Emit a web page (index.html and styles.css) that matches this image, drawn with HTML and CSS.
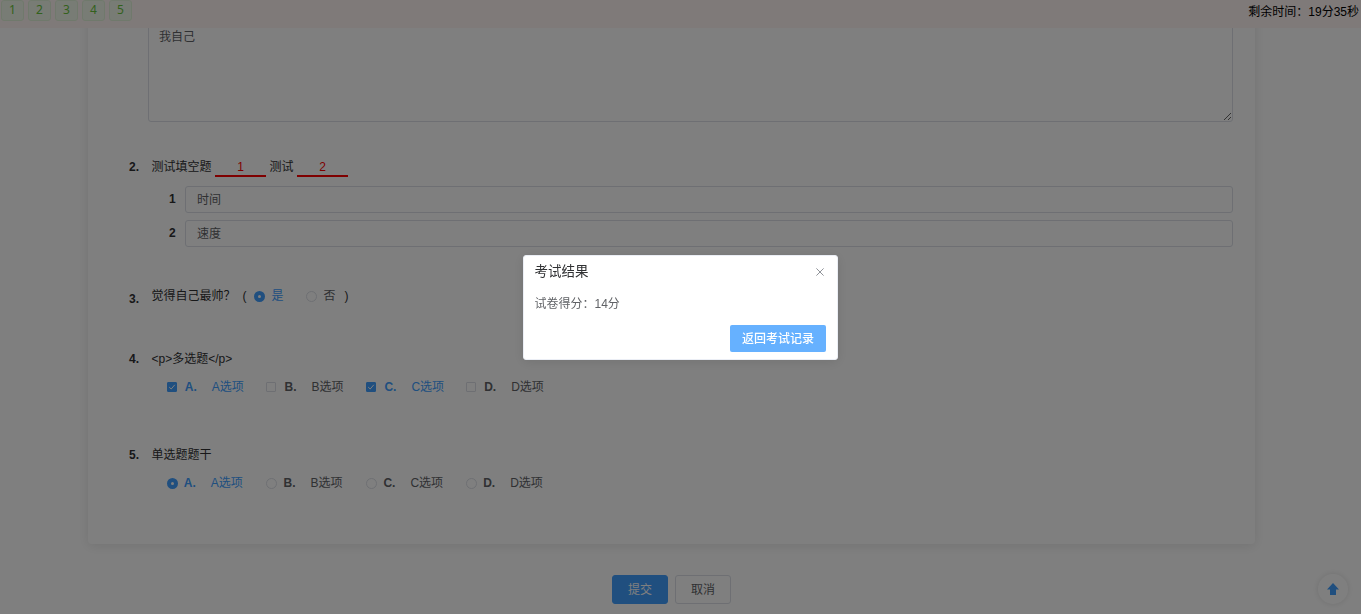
FILE: index.html
```
<!DOCTYPE html>
<html lang="zh-CN">
<head>
  <meta charset="UTF-8" />
  <meta name="viewport" content="width=device-width, initial-scale=1.0" />
  <title>在线考试</title>
  <link rel="stylesheet" href="styles.css">
</head>
<body>

  <header class="exam-header">
    <div class="tags">
      <span class="tag">1</span>
      <span class="tag">2</span>
      <span class="tag">3</span>
      <span class="tag">4</span>
      <span class="tag">5</span>
    </div>
    <div class="timer">剩余时间：19分35秒</div>
  </header>

  <main class="page">
    <div class="card">
      <textarea class="textarea">我自己</textarea>

      <section class="question q-fill">
        <div class="stem">
          <b class="num">2.</b>
          <span>测试填空题</span><span class="blank">1</span><span>测试</span><span class="blank">2</span>
        </div>
        <div class="fill-row"><b>1</b><input class="input" type="text" value="时间"></div>
        <div class="fill-row"><b>2</b><input class="input" type="text" value="速度"></div>
      </section>

      <section class="question q-judge">
        <div class="stem">
          <b class="num">3.</b>
          <span>觉得自己最帅？</span>
          <div class="judge">
            <span class="paren">(</span>
            <label class="choice checked"><i class="radio"></i><span>是</span></label>
            <label class="choice"><i class="radio"></i><span>否</span></label>
            <span class="paren">)</span>
          </div>
        </div>
      </section>

      <section class="question q-multi">
        <div class="stem"><b class="num">4.</b><span>&lt;p&gt;多选题&lt;/p&gt;</span></div>
        <div class="options">
          <label class="option checked"><i class="checkbox"><svg viewBox="0 0 10 10"><path d="M2.2 5.1 4.2 7 7.8 2.8" /></svg></i><b>A.</b><span>A选项</span></label>
          <label class="option"><i class="checkbox"></i><b>B.</b><span>B选项</span></label>
          <label class="option checked"><i class="checkbox"><svg viewBox="0 0 10 10"><path d="M2.2 5.1 4.2 7 7.8 2.8" /></svg></i><b>C.</b><span>C选项</span></label>
          <label class="option"><i class="checkbox"></i><b>D.</b><span>D选项</span></label>
        </div>
      </section>

      <section class="question q-single">
        <div class="stem"><b class="num">5.</b><span>单选题题干</span></div>
        <div class="options">
          <label class="option checked"><i class="radio"></i><b>A.</b><span>A选项</span></label>
          <label class="option"><i class="radio"></i><b>B.</b><span>B选项</span></label>
          <label class="option"><i class="radio"></i><b>C.</b><span>C选项</span></label>
          <label class="option"><i class="radio"></i><b>D.</b><span>D选项</span></label>
        </div>
      </section>
    </div>

    <div class="actions">
      <button class="btn btn-primary">提交</button>
      <button class="btn">取消</button>
    </div>
  </main>

  <div class="backtop">
    <svg viewBox="0 0 12 12"><path d="M6 0 12 6.5H9V12H3V6.5H0Z" /></svg>
  </div>

  <div class="overlay">
    <div class="dialog">
      <div class="dialog-header">
        <span>考试结果</span>
        <svg class="close" viewBox="0 0 8 8"><path d="M.4.4 7.6 7.6M7.6.4.4 7.6" /></svg>
      </div>
      <p class="dialog-text">试卷得分：14分</p>
      <div class="dialog-footer">
        <button class="btn-back">返回考试记录</button>
      </div>
    </div>
  </div>

</body>
</html>
```
FILE: styles.css
```
* {
  box-sizing: border-box;
}

body {
  margin: 0;
  height: 100vh;
  overflow: hidden;
  background: #fff;
  font-family: "Liberation Sans", "Noto Sans CJK SC", sans-serif;
  font-size: 12px;
  line-height: 18px;
  color: #303133;
}

button, input, textarea {
  font-family: inherit;
  font-size: 12px;
}

i {
  font-style: normal;
}

/* top bar */
.exam-header {
  position: fixed;
  top: 0;
  left: 0;
  right: 0;
  height: 28px;
  padding: 0 2px 0 1px;
  display: flex;
  justify-content: space-between;
  background: #fff4f2;
  color: #000;
  z-index: 10;
}

.tags {
  display: flex;
  gap: 4px;
}

.tag {
  width: 23px;
  height: 21px;
  line-height: 18px;
  text-align: center;
  font-family: "Noto Sans", sans-serif;
  background: #f0f9eb;
  border: 1px solid #e1f3d8;
  border-radius: 3px;
  color: #67c23a;
}

.timer {
  line-height: 24px;
}

/* paper */
.page {
  padding: 0 106px 0 88px;
}

.card {
  height: 544px;
  padding: 22px 22px 0 41px;
  border-radius: 0 0 4px 4px;
  box-shadow: 0 2px 12px 0 rgba(0, 0, 0, 0.1);
}

.textarea {
  display: block;
  width: 1085px;
  height: 100px;
  margin-left: 19px;
  padding: 5px 10px;
  line-height: 18px;
  color: #606266;
  background: #fff;
  border: 1px solid #dcdfe6;
  border-radius: 3px;
  resize: vertical;
}

.stem {
  display: flex;
  height: 20px;
  line-height: 20px;
}

.num {
  width: 22.5px;
}

.q-fill {
  padding-top: 35px;
}

.q-fill .stem {
  margin-bottom: 9px;
}

.blank {
  width: 51px;
  margin: 0 3.5px;
  text-align: center;
  color: #f00;
  border-bottom: 2px solid #f00;
}

.fill-row {
  display: flex;
  height: 27px;
  margin-bottom: 7px;
  padding-left: 40px;
  line-height: 26px;
}

.fill-row b {
  width: 16px;
}

.input {
  flex: 1;
  padding: 0 11px 2px;
  color: #606266;
  background: #fff;
  border: 1px solid #dcdfe6;
  border-radius: 3px;
}

.q-judge {
  padding-top: 32px;
}

.q-judge .num {
  padding-top: 3px;
}

.judge {
  display: flex;
  margin-left: 7px;
}

.choice {
  display: flex;
  align-items: center;
  gap: 7px;
  margin: 0 0 0 7px;
  color: #606266;
}

.choice + .choice {
  margin: 0 9px 0 22px;
}

.radio, .checkbox {
  width: 11px;
  height: 11px;
  flex: none;
  background: #fff;
  border: 1px solid #dcdfe6;
}

.radio {
  border-radius: 50%;
}

.checkbox {
  width: 10px;
  height: 10px;
  margin-right: 2px;
  border-radius: 1px;
}

.checked {
  color: #409eff;
}

.checked .radio {
  border: 4px solid #409eff;
}

.checked .checkbox {
  background: #409eff;
  border-color: #409eff;
}

.checkbox svg {
  display: block;
  width: 10px;
  height: 10px;
  margin: -1px;
  fill: none;
  stroke: #fff;
}

.q-multi {
  padding-top: 43px;
}

.q-single {
  padding-top: 48px;
}

.options {
  display: grid;
  grid-template-columns: repeat(4, 99.8px);
  height: 20px;
  margin-top: 8px;
  padding-left: 37.5px;
}

.option {
  display: flex;
  align-items: center;
  color: #606266;
}

.option.checked {
  color: #409eff;
}

.option b {
  width: 27px;
  margin-left: 6.3px;
}

.actions {
  display: flex;
  gap: 7px;
  margin: 31px 0 0 524px;
}

.btn {
  width: 56px;
  height: 29px;
  padding: 0 0 2px;
  color: #606266;
  background: #fff;
  border: 1px solid #dcdfe6;
  border-radius: 3px;
}

.btn-primary {
  color: #fff;
  background: #409eff;
  border-color: #409eff;
}

.backtop {
  position: fixed;
  right: 13px;
  bottom: 10px;
  width: 30px;
  height: 30px;
  display: flex;
  align-items: center;
  justify-content: center;
  background: #fff;
  border-radius: 50%;
  box-shadow: 0 0 6px rgba(0, 0, 0, 0.12);
}

.backtop svg {
  width: 12px;
  height: 12px;
  fill: #409eff;
}

/* result dialog */
.overlay {
  position: fixed;
  inset: 0;
  display: flex;
  align-items: center;
  justify-content: center;
  background: rgba(0, 0, 0, 0.5);
  z-index: 20;
}

.dialog {
  width: 315px;
  height: 105px;
  padding: 8px 11px 8px 10.5px;
  background: #fff;
  border: 1px solid #ebeef5;
  border-radius: 3px;
  box-shadow: 0 2px 12px 0 rgba(0, 0, 0, 0.1);
}

.dialog-header {
  display: flex;
  align-items: center;
  justify-content: space-between;
  height: 17px;
  font-size: 13.5px;
}

.close {
  width: 8px;
  height: 8px;
  margin-right: 2px;
  fill: none;
  stroke: #909399;
}

.dialog-text {
  margin: 14px 0 12px;
  color: #606266;
}

.dialog-footer {
  display: flex;
  justify-content: flex-end;
}

.btn-back {
  width: 96px;
  height: 27px;
  padding: 0 0 2px;
  font-weight: 500;
  color: #fff;
  background: #66b1ff;
  border: 0;
  border-radius: 2px;
}
```
